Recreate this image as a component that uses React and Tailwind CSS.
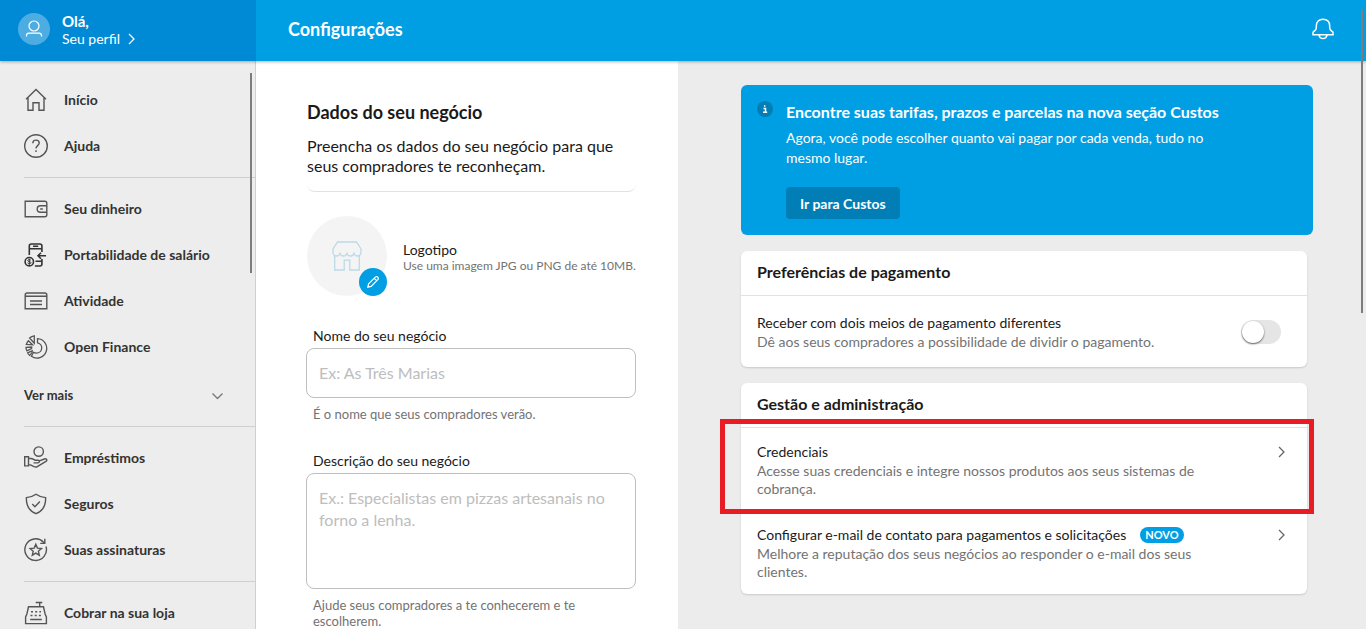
import React, { useState } from "react";

const Icon = ({ children, size = 24, width = 1.4, className = "" }) => (
  <svg
    width={size}
    height={size}
    viewBox={`0 0 ${size} ${size}`}
    fill="none"
    stroke="currentColor"
    strokeWidth={width}
    className={`shrink-0 ${className}`}
    aria-hidden="true"
  >
    {children}
  </svg>
);

const HomeIcon = () => (
  <Icon>
    <path d="M2 11.300 12 1.500l10 9.800M4 9.500v12.800h5v-7.500h6v7.500h5V9.500" />
  </Icon>
);

const HelpIcon = () => (
  <Icon>
    <circle cx="12" cy="12" r="11.3" />
    <path d="M8.800 9.200c0-1.900 1.300-3.100 3.200-3.100s3.200 1.200 3.200 2.900c0 2.600-3.200 2.700-3.200 5.400M12 16.300v1.600" />
  </Icon>
);

const WalletIcon = () => (
  <Icon>
    <path d="M1.200 4.200h19.600c1.100 0 2 .9 2 2v11.600c0 1.100-.9 2-2 2H1.200z" />
    <path d="M22.800 8.800h-6.300c-2 0-3.300 1.300-3.300 3.200s1.300 3.200 3.300 3.200h6.300M16.200 12h2.600" />
  </Icon>
);

const SalaryIcon = () => (
  <Icon width={1.6} className="text-[#333]">
    <path d="M5.300 12V3c0-1.200.9-2 2-2h8.600c1.200 0 2 .8 2 2v6M5.300 5.800h12.600M17.900 16v5c0 1.200-.8 2-2 2h-5M9 3.200h5.200M11.500 18.300h6.400" />
    <path d="M22 12.700h-8M17 9.700l-3 3 3 3" />
    <circle cx="5.300" cy="18.700" r="4.200" />
    <path
      d="M6.900 17.400c-.3-.6-.9-.8-1.600-.8-.9 0-1.500.4-1.500 1 0 1.500 3.200.7 3.200 2.200 0 .6-.7 1-1.600 1-.8 0-1.500-.3-1.800-.9M5.300 15.700v6"
      strokeWidth="1"
    />
  </Icon>
);

const ActivityIcon = () => (
  <Icon>
    <path d="M1.200 19.800V6c0-1.100.9-2 2-2h17.600c1.100 0 2 .9 2 2v13.800zM1.200 7.300h21.600" />
    <path d="M6 12h12M6 15.500h12" />
  </Icon>
);

const FinanceIcon = () => (
  <Icon width={1.3}>
    <path d="M13.500 3.600v4.200a5.200 5.200 0 0 1-1.200 10.300c-1 0-1.900-.3-2.700-.8l-2.200 3.900A9.700 9.700 0 1 0 13.500 3.600z" />
    <path d="M10.300.8v7.500L5.600 3c1.200-1.200 2.800-2 4.700-2.200zM4.400 5.700l4.200 4.100-6.300-.3c.4-1.400 1.100-2.700 2.100-3.800zM2 12.300l5.700-.3-.1 1.600-4.700 2.200c-.6-1.100-.9-2.300-.9-3.500zM3.600 17.800l4.600-2-.1 1.800-2.300 2.800c-.9-.7-1.700-1.600-2.200-2.600z" />
  </Icon>
);

const LoanIcon = () => (
  <Icon>
    <circle cx="14.700" cy="5.600" r="4.700" />
    <path d="M.7 10.700h3.800v9.200H.7zM4.500 12.500h2.300c1.900 0 2.800 1 4 1.700h3.400c1.400 0 1.900 2.400-.2 2.700H9.500M14.800 15.200l5.600-2.200c2-.7 3.300 1.200 1.500 2.400l-8.600 5.200c-1.200.7-2.400.4-3.400 0l-3.400-1.700h-2" />
  </Icon>
);

const ShieldIcon = () => (
  <Icon>
    <path d="M12 2.300c2.800 2 6 3.200 9.600 3.300.3 7-2.400 13.200-9.600 16.100C4.800 18.800 2.100 12.600 2.400 5.600 6 5.500 9.200 4.300 12 2.300z" />
    <path d="m8.300 12.100 2.600 2.600 5-5.200" />
  </Icon>
);

const SubscriptionIcon = () => (
  <Icon>
    <path d="M22 8.500A10.800 10.800 0 1 1 19.500 4.200l1 1" />
    <path d="M20.800.8v4.600h-4.600" />
    <path d="m11.800 6.300 1.600 3.800 4.100.4-3.100 2.700.9 4-3.500-2.100-3.500 2.100.9-4-3.100-2.700 4.100-.4z" />
  </Icon>
);

const RegisterIcon = () => (
  <Icon>
    <path d="M4.500 5.800h15l1.600 7.200 1.300 3v6.600H1.600V16l1.300-3zM15.700 5.500v-4M11.700 1.500h6.600M6.200 18.500h11.600" />
    <path d="M7 10.700h10M6.500 14.500h11" strokeWidth="1.600" strokeDasharray="2 2.200" />
  </Icon>
);

const Chevron = ({ className = "" }) => (
  <svg
    width="7"
    height="12"
    viewBox="0 0 7 12"
    fill="none"
    stroke="currentColor"
    strokeWidth="1.300"
    className={`shrink-0 ${className}`}
    aria-hidden="true"
  >
    <path d="m1 1 5 5-5 5" />
  </svg>
);

const menu = [
  [
    { label: "Início", icon: HomeIcon },
    { label: "Ajuda", icon: HelpIcon },
  ],
  [
    { label: "Seu dinheiro", icon: WalletIcon },
    { label: "Portabilidade de salário", icon: SalaryIcon },
    { label: "Atividade", icon: ActivityIcon },
    { label: "Open Finance", icon: FinanceIcon },
  ],
  [
    { label: "Empréstimos", icon: LoanIcon },
    { label: "Seguros", icon: ShieldIcon },
    { label: "Suas assinaturas", icon: SubscriptionIcon },
  ],
  [{ label: "Cobrar na sua loja", icon: RegisterIcon }],
];

const Header = () => (
  <header className="relative z-10 flex h-[61px] shrink-0 bg-[#009ee3] text-white shadow-[0_1px_3px_rgba(0,0,0,0.3)]">
    <a href="#perfil" className="flex w-64 shrink-0 items-center gap-3 bg-[#008ad6] pb-1 pl-[18px]">
      <span className="flex size-8 items-center justify-center rounded-full bg-[#4dade2]">
        <Icon size={18} width={1.2}>
          <circle cx="9" cy="6" r="5" />
          <path d="M1.500 16.500v-1c0-1.500 1-2.300 2.500-2.300h10c1.500 0 2.500.8 2.500 2.300v1" />
        </Icon>
      </span>
      <span className="flex flex-col pt-0.5">
        <span className="text-[15px] leading-[18px] font-bold">Olá,</span>
        <span className="flex items-center gap-2 text-[14px] leading-[18px]">
          Seu perfil
          <Chevron />
        </span>
      </span>
    </a>
    <div className="flex flex-1 items-center justify-between pr-8 pb-1 pl-8">
      <h1 className="text-[18px] leading-6 font-bold">Configurações</h1>
      <button type="button" aria-label="Notificações">
        <Icon size={22} width={1.5}>
          <path d="M1 16.700v-2.200c0-.8.600-1.100 1.400-1.500 1.300-.7 1.900-1.500 1.900-3.200V8c0-4.300 2.700-6.800 6.700-6.800s6.700 2.500 6.700 6.800v1.800c0 1.700.6 2.500 1.900 3.200.8.400 1.400.7 1.400 1.500v2.200z" />
          <path d="M7 16.900c.4 2.300 1.900 3.700 4 3.700s3.600-1.400 4-3.700" />
        </Icon>
      </button>
    </div>
  </header>
);

const Sidebar = () => (
  <aside className="relative w-64 shrink-0 overflow-hidden border-r border-[#cfcfcf] bg-[#ededed] pt-4">
    <nav>
      {menu.map((group, index) => (
        <div key={index} className={index > 0 ? "mt-2 ml-6 border-t border-[#cfcfcf] pt-2" : "ml-6"}>
          {group.map(({ label, icon: ItemIcon }) => (
            <a
              key={label}
              href="#menu"
              className="flex h-[46px] items-center gap-4 text-[14px] font-bold text-[#333]"
            >
              <span className="text-[#555]">
                <ItemIcon />
              </span>
              <span className="pb-0.5">{label}</span>
            </a>
          ))}
          {index === 1 && (
            <button
              type="button"
              className="flex h-12 w-full items-center justify-between pt-1 pr-[34px] text-[13px] font-bold text-[#333]"
            >
              Ver mais
              <Chevron className="rotate-90 text-[#777]" />
            </button>
          )}
        </div>
      ))}
    </nav>
    {/* Scroll thumb */}
    <div className="absolute top-3 right-[3px] h-[200px] w-0.5 bg-[#7d7d7d]" />
  </aside>
);

const BusinessForm = () => (
  <section className="w-[422px] shrink-0 overflow-hidden bg-white pt-[39px] pr-[42px] pl-[50px] text-[#1a1a1a]">
    <div className="ml-px rounded-b-lg border-b border-[#e2e2e2] pb-[15px]">
      <h2 className="text-[18px] leading-6 font-bold">Dados do seu negócio</h2>
      <p className="mt-3 text-[16px] leading-5">
        Preencha os dados do seu negócio para que seus compradores te reconheçam.
      </p>
    </div>

    {/* Logo */}
    <div className="mt-6 ml-px flex items-center gap-4">
      <div className="relative flex size-20 shrink-0 items-center justify-center rounded-full bg-[#f4f4f4]">
        <Icon size={30} width={1.3} className="text-[#bcd9e8]">
          <path d="M5.500 1h19L29 8v3.500a3.500 3.500 0 0 1-7 0 3.500 3.500 0 0 1-7 0 3.500 3.500 0 0 1-7 0 3.500 3.500 0 0 1-7 0V8z" />
          <path d="M2.700 14.800V29h9.500V19.200h5.600V29h9.500V14.800" />
        </Icon>
        <button
          type="button"
          aria-label="Editar logotipo"
          className="absolute right-0 bottom-0 flex size-7 items-center justify-center rounded-full bg-[#009ee3] text-white"
        >
          <Icon size={14} width={1.2}>
            <path d="m1.800 12.200.8-3.300 6.700-6.700a1.700 1.700 0 0 1 2.500 2.500l-6.700 6.700zM8.300 3.300l2.400 2.400" />
          </Icon>
        </button>
      </div>
      <div className="pt-[3px] whitespace-nowrap">
        <p className="text-[14px] leading-4">Logotipo</p>
        <p className="text-[12px] leading-4 text-[#737373]">Use uma imagem JPG ou PNG de até 10MB.</p>
      </div>
    </div>

    <form>
      <label htmlFor="name" className="mt-8 ml-[7px] block text-[14px] leading-4">
        Nome do seu negócio
      </label>
      <input
        id="name"
        type="text"
        placeholder="Ex: As Três Marias"
        className="mt-1 block h-[50px] w-full rounded-lg border border-[#bfbfbf] px-3 pb-0.5 text-[16px] placeholder-[#bdbdbd] outline-none"
      />
      <p className="mt-2 ml-[7px] text-[13px] leading-4 text-[#737373]">
        É o nome que seus compradores verão.
      </p>

      <label htmlFor="description" className="mt-[31px] ml-[7px] block text-[14px] leading-4">
        Descrição do seu negócio
      </label>
      <textarea
        id="description"
        placeholder="Ex.: Especialistas em pizzas artesanais no forno a lenha."
        className="mt-1 block h-[116px] w-full resize-none rounded-lg border border-[#bfbfbf] px-3 py-[13px] text-[16px] leading-[22px] placeholder-[#bdbdbd] outline-none"
      />
      <p className="mt-2 ml-[7px] max-w-[290px] text-[13px] leading-4 text-[#737373]">
        Ajude seus compradores a te conhecerem e te escolherem.
      </p>
    </form>
  </section>
);

const CostsBanner = () => (
  <section className="flex items-start gap-[13px] rounded-md bg-[#009ee3] px-4 pt-4 pb-4 text-white">
    <span className="flex size-4 shrink-0 items-center justify-center rounded-full bg-[#007eb5]">
      <Icon size={8} width={1.5}>
        <path d="M2.500 3.500h2v4M2 7.300h4.200M3.700.3v1.500" />
      </Icon>
    </span>
    <div>
      <h2 className="mt-px text-[16px] leading-5 font-bold">
        Encontre suas tarifas, prazos e parcelas na nova seção Custos
      </h2>
      <p className="mt-1.5 max-w-[436px] text-[14px] leading-5">
        Agora, você pode escolher quanto vai pagar por cada venda, tudo no mesmo lugar.
      </p>
      <button
        type="button"
        className="mt-[19px] block h-8 rounded bg-[#007eb5] px-3.5 text-[14px] font-bold"
      >
        Ir para Custos
      </button>
    </div>
  </section>
);

const Card = ({ title, children }) => (
  <section className="mt-4 mr-1.5 rounded-md bg-white shadow-[0_1px_2px_rgba(0,0,0,0.15)]">
    <h2 className="border-b border-[#e2e2e2] px-4 pt-[11px] pb-[13px] text-[16px] leading-5 font-bold text-[#1a1a1a]">
      {title}
    </h2>
    {children}
  </section>
);

const CardLink = ({ title, description, badge, highlighted }) => (
  <a href="#config" className="relative flex items-start justify-between pt-3.5 pr-[22px] pb-[13px] pl-4">
    <div className="max-w-[460px]">
      <p className="flex items-center gap-3.5 text-[14px] leading-5 whitespace-nowrap text-[#1a1a1a]">
        {title}
        {badge && (
          <span className="rounded-full bg-[#009ee3] px-[5px] text-[11px] leading-4 font-bold text-white">
            {badge}
          </span>
        )}
      </p>
      <p className="text-[14px] leading-[18px] text-[#737373]">{description}</p>
    </div>
    <Chevron className="mt-1 text-[#666]" />
    {highlighted && (
      <span className="absolute -top-[9px] -right-[7px] -bottom-[3px] -left-[21px] z-10 border-[5px] border-[#e81c24]" />
    )}
  </a>
);

const App = () => {
  const [splitPayment, setSplitPayment] = useState(false);

  return (
    <div className="relative flex h-screen flex-col overflow-hidden bg-[#ececec] font-['Lato',sans-serif]">
      <Header />
      <div className="flex min-h-0 flex-1">
        <Sidebar />
        <main className="flex min-w-0 flex-1">
          <BusinessForm />
          <div className="min-w-0 flex-1 overflow-hidden pt-6 pr-[53px] pl-[63px]">
            <CostsBanner />

            <Card title="Preferências de pagamento">
              <div className="flex items-center justify-between pt-[17px] pr-[26px] pb-4 pl-4">
                <label htmlFor="split" className="text-[14px]">
                  <span className="block leading-5 text-[#1a1a1a]">
                    Receber com dois meios de pagamento diferentes
                  </span>
                  <span className="block leading-[18px] text-[#737373]">
                    Dê aos seus compradores a possibilidade de dividir o pagamento.
                  </span>
                </label>
                <input
                  id="split"
                  type="checkbox"
                  role="switch"
                  checked={splitPayment}
                  onChange={(e) => setSplitPayment(e.target.checked)}
                  className="flex h-6 w-10 shrink-0 appearance-none items-center rounded-full bg-[#e5e5e5] px-px before:size-[22px] before:rounded-full before:bg-white before:shadow-[0_1px_2px_rgba(0,0,0,0.6)] checked:justify-end checked:bg-[#009ee3]"
                />
              </div>
            </Card>

            <Card title="Gestão e administração">
              <CardLink
                title="Credenciais"
                description="Acesse suas credenciais e integre nossos produtos aos seus sistemas de cobrança."
                highlighted
              />
              <CardLink
                title="Configurar e-mail de contato para pagamentos e solicitações"
                description="Melhore a reputação dos seus negócios ao responder o e-mail dos seus clientes."
                badge="NOVO"
              />
            </Card>
          </div>
        </main>
      </div>
      {/* Page scroll thumb */}
      <div className="absolute top-[9px] right-[3px] z-20 h-[304px] w-0.5 bg-[#7d7d7d]" />
    </div>
  );
};

export default App;
